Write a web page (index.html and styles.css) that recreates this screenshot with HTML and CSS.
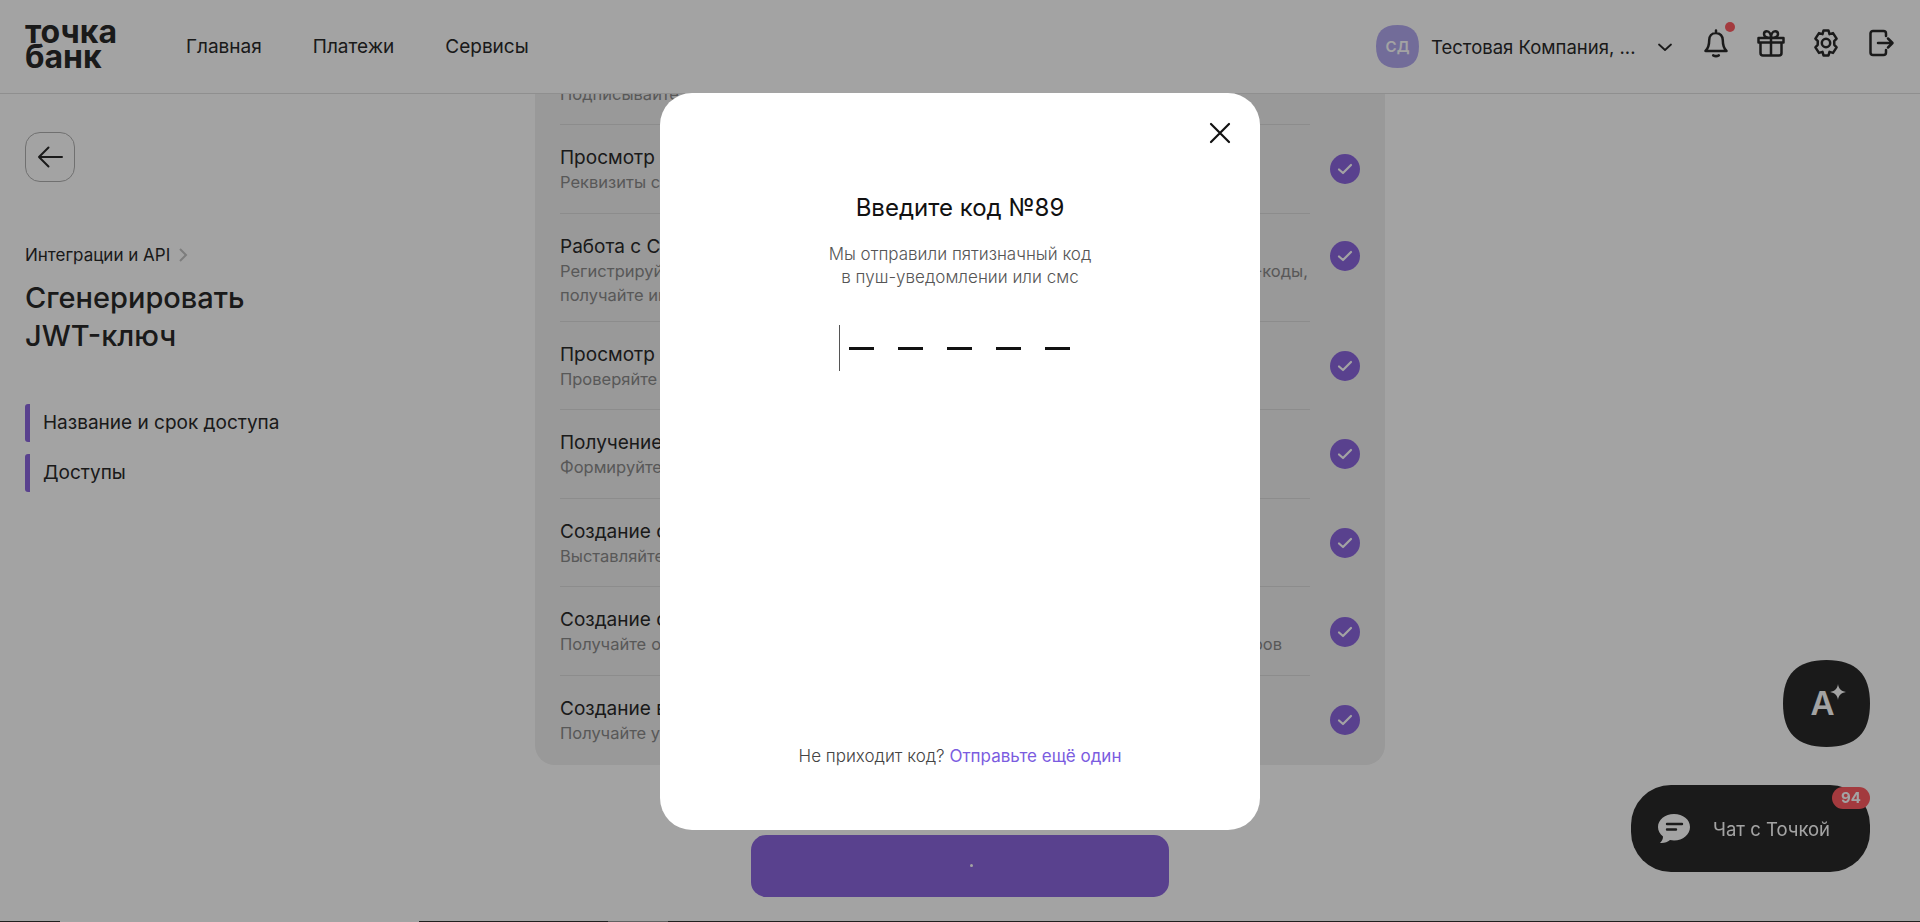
FILE: index.html
```html
<!DOCTYPE html>
<html lang="ru">
<head>
    <meta charset="UTF-8">
    <meta name="viewport" content="width=device-width, initial-scale=1.0">
    <title>Сгенерировать JWT-ключ</title>
    <link rel="stylesheet" href="styles.css">
</head>
<body>
    <header class="topbar">
        <a class="logo" href="#">точка<br>банк</a>
        <nav class="topnav">
            <a href="#">Главная</a>
            <a href="#">Платежи</a>
            <a href="#">Сервисы</a>
        </nav>
        <div class="account">
            <span class="avatar">СД</span>
            <span class="company">Тестовая Компания, ...</span>
            <svg class="chevron" width="16" height="16" viewBox="0 0 16 16"><path d="M2 5.500l6 5.500 6-5.500" fill="none" stroke="#2a2a2a" stroke-width="1.800" stroke-linecap="round" stroke-linejoin="round"/></svg>
        </div>
        <div class="tools">
            <span class="tool tool-bell">
                <svg width="30" height="30" viewBox="0 0 30 30"><path d="M15 2.500v2.600M15 5.100c-4.300 0-6.800 3.200-6.800 7.200 0 5.500-.9 8-3.700 10.700h21c-2.800-2.700-3.700-5.200-3.700-10.700 0-4-2.500-7.200-6.800-7.200zM12.200 27.300c1.700 1 3.900 1 5.600 0" fill="none" stroke="#2a2a2a" stroke-width="2.500" stroke-linecap="round" stroke-linejoin="round"/></svg>
                <i class="bell-dot"></i>
            </span>
            <span class="tool">
                <svg width="30" height="30" viewBox="0 0 30 30"><path d="M2.500 10h25v4.500h-25zM4.500 14.500V25A2.500 2.500 0 0 0 7 27.500h16a2.500 2.500 0 0 0 2.500-2.500V14.500M15 10v17.500M15 10c-4 0-7-1.300-7-4 0-1.700 1.200-2.800 2.800-2.800C13.500 3.200 15 6.500 15 10zM15 10c4 0 7-1.300 7-4 0-1.700-1.200-2.800-2.800-2.800C16.500 3.200 15 6.500 15 10z" fill="none" stroke="#2a2a2a" stroke-width="2.500" stroke-linejoin="round"/></svg>
            </span>
            <span class="tool">
                <svg width="30" height="30" viewBox="0 0 30 30"><circle cx="15" cy="15" r="4.200" fill="none" stroke="#2a2a2a" stroke-width="2.500"/><path d="M12.500 2.500h5l1 3.600 3.500-1 3.600 5.500-2.400 2.600.1 3.600 2.300 2.600-3.600 5.500-3.500-1-1 3.500h-5l-1-3.500-3.500 1-3.600-5.500 2.300-2.600.1-3.600-2.400-2.600 3.600-5.500 3.500 1z" fill="none" stroke="#2a2a2a" stroke-width="2.500" stroke-linejoin="round"/></svg>
            </span>
            <span class="tool">
                <svg width="30" height="30" viewBox="0 0 30 30"><path d="M20 8V5.500A2.500 2.500 0 0 0 17.500 3H7a2.500 2.500 0 0 0-2.500 2.500v19A2.500 2.500 0 0 0 7 27h10.500a2.500 2.500 0 0 0 2.500-2.500V22M12 15h14M22 10.500l4.500 4.500-4.500 4.500" fill="none" stroke="#2a2a2a" stroke-width="2.500" stroke-linecap="round" stroke-linejoin="round"/></svg>
            </span>
        </div>
    </header>

    <main class="layout">
        <aside class="sidebar">
            <a class="back" href="#">
                <svg width="26" height="26" viewBox="0 0 26 26"><path d="M25 13H2M11.500 3.500L2 13l9.500 9.500" fill="none" stroke="#2a2a2a" stroke-width="2" stroke-linecap="round" stroke-linejoin="round"/></svg>
            </a>
            <div class="crumb">
                Интеграции и API
                <svg width="10" height="16" viewBox="0 0 10 16"><path d="M2 2l6 6-6 6" fill="none" stroke="#c4c4c4" stroke-width="2"/></svg>
            </div>
            <h1 class="page-title">Сгенерировать<br>JWT-ключ</h1>
            <ul class="steps">
                <li>Название и срок доступа</li>
                <li>Доступы</li>
            </ul>
        </aside>

        <section class="center">
            <div class="panel">
                <div class="row row-first">
                    <div class="row-text">
                        <div class="row-title">Подписание документов</div>
                        <div class="row-desc">Подписывайте документы и платёжные поручения</div>
                    </div>
                    <span class="check check-top"><svg width="16" height="12" viewBox="0 0 16 12"><path d="M2 6.500l4 3.500 8-8" fill="none" stroke="#fff" stroke-width="2.200" stroke-linecap="round" stroke-linejoin="round"/></svg></span>
                </div>
                <div class="row">
                    <div class="row-text">
                        <div class="row-title">Просмотр реквизитов</div>
                        <div class="row-desc">Реквизиты счетов и карточка компании</div>
                    </div>
                    <span class="check"><svg width="16" height="12" viewBox="0 0 16 12"><path d="M2 6.500l4 3.500 8-8" fill="none" stroke="#fff" stroke-width="2.200" stroke-linecap="round" stroke-linejoin="round"/></svg></span>
                </div>
                <div class="row">
                    <div class="row-text">
                        <div class="row-title">Работа с СБП</div>
                        <div class="row-desc row-desc-fit">Регистрируйте компании и точки в системе быстрых платежей, создавайте QR-коды,</div>
                        <div class="row-desc">получайте информацию о платежах</div>
                    </div>
                    <span class="check check-top"><svg width="16" height="12" viewBox="0 0 16 12"><path d="M2 6.500l4 3.500 8-8" fill="none" stroke="#fff" stroke-width="2.200" stroke-linecap="round" stroke-linejoin="round"/></svg></span>
                </div>
                <div class="row">
                    <div class="row-text">
                        <div class="row-title">Просмотр выписок</div>
                        <div class="row-desc">Проверяйте остатки и движение средств</div>
                    </div>
                    <span class="check"><svg width="16" height="12" viewBox="0 0 16 12"><path d="M2 6.500l4 3.500 8-8" fill="none" stroke="#fff" stroke-width="2.200" stroke-linecap="round" stroke-linejoin="round"/></svg></span>
                </div>
                <div class="row">
                    <div class="row-text">
                        <div class="row-title">Получение выписок</div>
                        <div class="row-desc">Формируйте выписки по счетам</div>
                    </div>
                    <span class="check"><svg width="16" height="12" viewBox="0 0 16 12"><path d="M2 6.500l4 3.500 8-8" fill="none" stroke="#fff" stroke-width="2.200" stroke-linecap="round" stroke-linejoin="round"/></svg></span>
                </div>
                <div class="row">
                    <div class="row-text">
                        <div class="row-title">Создание счетов</div>
                        <div class="row-desc">Выставляйте счета покупателям</div>
                    </div>
                    <span class="check"><svg width="16" height="12" viewBox="0 0 16 12"><path d="M2 6.500l4 3.500 8-8" fill="none" stroke="#fff" stroke-width="2.200" stroke-linecap="round" stroke-linejoin="round"/></svg></span>
                </div>
                <div class="row">
                    <div class="row-text">
                        <div class="row-title">Создание ссылок на оплату</div>
                        <div class="row-desc row-desc-short">Получайте оплату по ссылке и следите за статусами всех своих заказов и всех товаров</div>
                    </div>
                    <span class="check"><svg width="16" height="12" viewBox="0 0 16 12"><path d="M2 6.500l4 3.500 8-8" fill="none" stroke="#fff" stroke-width="2.200" stroke-linecap="round" stroke-linejoin="round"/></svg></span>
                </div>
                <div class="row row-last">
                    <div class="row-text">
                        <div class="row-title">Создание вебхуков</div>
                        <div class="row-desc">Получайте уведомления о событиях</div>
                    </div>
                    <span class="check"><svg width="16" height="12" viewBox="0 0 16 12"><path d="M2 6.500l4 3.500 8-8" fill="none" stroke="#fff" stroke-width="2.200" stroke-linecap="round" stroke-linejoin="round"/></svg></span>
                </div>
            </div>
            <button class="submit" type="button"><i class="submit-dot"></i></button>
        </section>
    </main>

    <div class="edge-strip">
        <i class="edge-dark edge-a"></i>
        <i class="edge-light"></i>
        <i class="edge-dark edge-b"></i>
        <i class="edge-grey"></i>
        <i class="edge-dark edge-c"></i>
    </div>

    <button class="float-a" type="button">
        A
        <svg class="sparkle" width="16" height="16" viewBox="0 0 16 16"><path d="M8 0c.7 4.700 2.600 6.900 8 8-5.400 1.100-7.300 3.300-8 8-.7-4.700-2.600-6.900-8-8 5.400-1.100 7.300-3.300 8-8z" fill="#fff"/></svg>
    </button>
    <button class="float-chat" type="button">
        <svg width="34" height="31" viewBox="0 0 34 31"><path d="M17 1C8 1 1 6.700 1 14c0 3.800 1.900 7.100 5 9.500.1 2.300-1.100 4.700-3 6.500 4 .4 7.500-.8 10-3 1.300.3 2.600.5 4 .5 9 0 16-6 16-13.500S26 1 17 1z" fill="#fff"/><path d="M10 11h15M10 16.500h9" fill="none" stroke="#292929" stroke-width="2.400" stroke-linecap="round"/></svg>
        <span class="chat-label">Чат с Точкой</span>
        <span class="chat-badge">94</span>
    </button>

    <div class="overlay">
        <div class="modal">
            <button class="modal-close" type="button">
                <svg width="22" height="22" viewBox="0 0 22 22"><path d="M2 2l18 18M20 2L2 20" fill="none" stroke="#111" stroke-width="2.200" stroke-linecap="round"/></svg>
            </button>
            <h2 class="modal-title">Введите код №89</h2>
            <p class="modal-desc">Мы отправили пятизначный код<br>в пуш-уведомлении или смс</p>
            <div class="code">
                <span class="caret"></span>
                <span class="dash"></span>
                <span class="dash"></span>
                <span class="dash"></span>
                <span class="dash"></span>
                <span class="dash"></span>
            </div>
            <p class="modal-foot">Не приходит код? <a href="#">Отправьте ещё один</a></p>
        </div>
    </div>
</body>
</html>
```

FILE: styles.css
```css
* {
    box-sizing: border-box;
}
body {
    margin: 0;
    height: 922px;
    overflow: hidden;
    font-family: 'Inter', 'Noto Sans', sans-serif;
    background: #fff;
    color: #2a2a2a;
}
a {
    color: inherit;
    text-decoration: none;
}
button {
    border: 0;
    padding: 0;
    font-family: inherit;
    cursor: pointer;
}

/* top bar */
.topbar {
    position: relative;
    z-index: 2;
    display: flex;
    align-items: center;
    height: 94px;
    padding: 0 24px 0 25px;
    background: #fff;
    border-bottom: 1px solid #e0e0e0;
}
.logo {
    width: 161px;
    font-size: 32px;
    line-height: 25px;
    font-weight: 700;
    margin-top: -5px;
}
.topnav {
    display: flex;
    gap: 51px;
    font-size: 19px;
}
.account {
    display: flex;
    align-items: center;
    margin-left: auto;
}
.avatar {
    display: flex;
    align-items: center;
    justify-content: center;
    width: 43px;
    height: 43px;
    clip-path: path('M21.500 0C36 0 43 7 43 21.500S36 43 21.500 43S0 36 0 21.500S7 0 21.500 0Z');
    background: #b3aaf0;
    color: #fff;
    font-size: 15px;
    font-weight: 600;
}
.company {
    margin-left: 12px;
    width: 206px;
    font-size: 18.500px;
    white-space: nowrap;
}
.chevron {
    margin-left: 20px;
}
.tools {
    display: flex;
    gap: 25px;
    margin-left: 28px;
    margin-top: -7px;
}
.tool {
    position: relative;
    display: block;
    width: 30px;
    height: 30px;
}
.bell-dot {
    position: absolute;
    top: -6px;
    right: -4px;
    width: 10px;
    height: 10px;
    border-radius: 50%;
    background: #ff5b62;
}

/* page */
.layout {
    display: flex;
    height: 827px;
}
.sidebar {
    width: 535px;
    padding: 38px 0 0 25px;
}
.back {
    display: flex;
    align-items: center;
    justify-content: center;
    width: 50px;
    height: 50px;
    border: 1px solid #b0b0b0;
    border-radius: 15px;
}
.crumb {
    display: flex;
    align-items: center;
    gap: 8px;
    margin-top: 61px;
    font-size: 17px;
    line-height: 24px;
}
.page-title {
    margin: 12px 0 0;
    font-size: 29px;
    line-height: 38px;
    font-weight: 500;
}
.steps {
    list-style: none;
    margin: 49px 0 0;
    padding: 0;
    font-size: 19px;
}
.steps li {
    height: 38px;
    line-height: 38px;
    margin-bottom: 12px;
    padding-left: 13px;
    border-left: 5px solid #8c67df;
    border-radius: 3px;
}

.center {
    display: flex;
    flex-direction: column;
    align-items: center;
    width: 850px;
}
.panel {
    width: 850px;
    margin-top: -56px;
    padding: 0 25px;
    background: #efefef;
    border-radius: 0 0 20px 20px;
}
.row {
    display: flex;
    align-items: center;
    gap: 20px;
}
.row-text {
    width: 750px;
    min-height: 88.600px;
    padding: 21px 0 14px;
    border-bottom: 1px solid #dcdcdc;
}
.row-first .row-text {
    min-height: 0;
    padding: 20px 0 18px;
}
.row-last .row-text {
    border-bottom: 0;
}
.row-title {
    font-size: 19px;
    line-height: 24px;
    white-space: nowrap;
}
.row-desc {
    font-size: 16.500px;
    line-height: 24px;
    color: #8a8a8a;
    white-space: nowrap;
}
.row-desc-fit {
    width: 748px;
    white-space: normal;
    text-align-last: justify;
}
.row-desc-short {
    width: 722px;
    white-space: normal;
    text-align-last: justify;
}
.check {
    display: flex;
    align-items: center;
    justify-content: center;
    flex: none;
    width: 30px;
    height: 30px;
    border-radius: 50%;
    background: #8c67df;
}
.check-top {
    align-self: flex-start;
    margin-top: 27.500px;
}
.row-first .check-top {
    margin-top: 26px;
}
.submit {
    display: flex;
    align-items: center;
    justify-content: center;
    flex: none;
    width: 418px;
    height: 62px;
    margin-top: 70px;
    border-radius: 15px;
    background: #8c67df;
}
.submit-dot {
    width: 3px;
    height: 3px;
    margin-left: 22px;
    border-radius: 50%;
    background: #fff;
}

/* leftover of the desktop under the window */
.edge-strip {
    display: flex;
    height: 1px;
}
.edge-strip i {
    display: block;
    height: 1px;
}
.edge-dark {
    background: #333;
}
.edge-a {
    width: 60px;
}
.edge-light {
    width: 359px;
    background: #fff;
}
.edge-b {
    width: 189px;
}
.edge-grey {
    width: 60px;
    background: #999;
}
.edge-c {
    flex: 1;
}

/* floating buttons */
.float-a {
    position: fixed;
    top: 660px;
    left: 1783px;
    width: 87px;
    height: 87px;
    padding-right: 8px;
    clip-path: path('M43.500 0C73 0 87 14 87 43.500S73 87 43.500 87S0 73 0 43.500S14 0 43.500 0Z');
    background: #292929;
    color: #fff;
    font-size: 33px;
    font-weight: 600;
    line-height: 87px;
    text-align: center;
}
.sparkle {
    position: absolute;
    top: 24px;
    left: 47px;
}
.float-chat {
    position: fixed;
    top: 785px;
    left: 1631px;
    display: flex;
    align-items: center;
    width: 239px;
    height: 87px;
    padding-left: 26px;
    border-radius: 40px;
    background: #292929;
    color: #fff;
}
.chat-label {
    margin-left: 22px;
    font-size: 18.500px;
}
.chat-badge {
    position: absolute;
    top: 2px;
    right: 0;
    width: 38px;
    height: 22px;
    border-radius: 11px;
    background: #ff5b62;
    font-size: 15px;
    font-weight: 700;
    line-height: 22px;
    text-align: center;
}

/* code dialog */
.overlay {
    position: fixed;
    top: 0;
    left: 0;
    z-index: 5;
    width: 100%;
    height: 100%;
    padding-top: 93px;
    background: rgba(0, 0, 0, 0.36);
}
.modal {
    position: relative;
    display: flex;
    flex-direction: column;
    align-items: center;
    width: 600px;
    height: 737px;
    margin: 0 auto;
    padding-top: 98px;
    background: #fff;
    border-radius: 32px;
    color: #111;
}
.modal-close {
    position: absolute;
    top: 29px;
    right: 29px;
    width: 22px;
    height: 22px;
    background: none;
}
.modal-title {
    margin: 0;
    font-size: 24px;
    line-height: 34px;
    font-weight: 400;
}
.modal-desc {
    margin: 18px 0 0;
    font-size: 17px;
    line-height: 23px;
    font-weight: 300;
    color: #555;
    text-align: center;
}
.code {
    display: flex;
    align-items: center;
    gap: 24px;
    height: 46px;
    margin-top: 36px;
    margin-right: 12px;
}
.caret {
    width: 1px;
    height: 46px;
    margin-right: -15px;
    background: #555;
}
.dash {
    width: 25px;
    height: 3px;
    background: #111;
}
.modal-foot {
    margin: auto 0 62px;
    font-size: 17px;
    line-height: 24px;
    font-weight: 300;
    color: #444;
}
.modal-foot a {
    color: #7b5ce0;
    font-weight: 400;
}
```
